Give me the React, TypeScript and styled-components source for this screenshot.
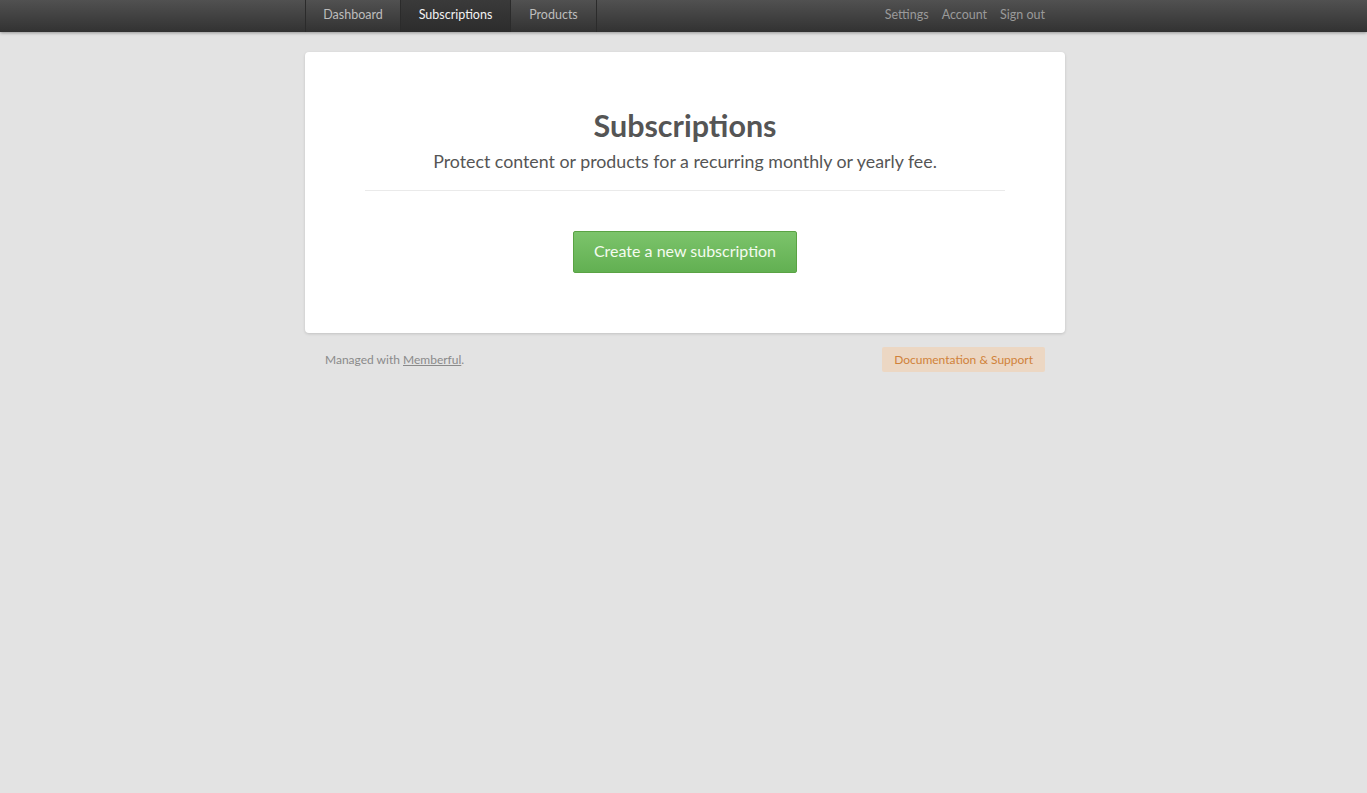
import React from "react";
import styled, { createGlobalStyle } from "styled-components";

const Global = createGlobalStyle`
  html, body { margin: 0; padding: 0; }
  body {
    background: #e3e3e3;
    font-family: "Lato", "Open Sans", sans-serif;
    color: #555;
    min-height: 793px;
  }
`;

const Page = styled.div`
  padding-left: 3px;
`;

const TopBar = styled.header`
  height: 32px;
  margin-left: -3px;
  padding-left: 3px;
  background: linear-gradient(#515151, #323232);
  box-shadow: 0 1px 3px rgba(0, 0, 0, 0.35);
`;

const BarInner = styled.div`
  width: 760px;
  margin: 0 auto;
  height: 100%;
  display: flex;
  justify-content: space-between;
  align-items: stretch;
`;

const Tabs = styled.nav`
  display: flex;
  border-left: 1px solid #2b2b2b;
`;

const Tab = styled.a<{ $active?: boolean; $w: number }>`
  display: flex;
  align-items: center;
  justify-content: center;
  width: ${(p) => p.$w}px;
  padding-bottom: 4px;
  box-sizing: border-box;
  font-size: 12.5px;
  color: ${(p) => (p.$active ? "#f2f2f2" : "#bdbdbd")};
  text-decoration: none;
  border-right: 1px solid #2b2b2b;
  background: ${(p) => (p.$active ? "linear-gradient(#3a3a3a, #2c2c2c)" : "transparent")};
`;

const Links = styled.nav`
  display: flex;
  align-items: center;
  gap: 13px;
  padding: 0 20px 4px 0;
`;

const Link = styled.a`
  font-size: 12.5px;
  color: #9a9a9a;
  text-decoration: none;
`;

const Main = styled.main`
  width: 760px;
  margin: 20px auto 0;
`;

const Card = styled.section`
  background: #fff;
  border-radius: 4px;
  box-shadow: 0 1px 3px rgba(0, 0, 0, 0.15);
  padding: 55px 60px 60px;
  display: flex;
  flex-direction: column;
  align-items: center;
`;

const Title = styled.h1`
  margin: 0;
  font-size: 30.5px;
  font-weight: 700;
  color: #555;
  line-height: 37px;
`;

const Subtitle = styled.p`
  margin: 0;
  padding-top: 5px;
  font-size: 17.8px;
  line-height: 24px;
  color: #555;
`;

const Divider = styled.hr`
  align-self: stretch;
  border: 0;
  border-top: 1px solid #eaeaea;
  margin: 17px 0 40px;
`;

const PrimaryButton = styled.button`
  width: 224px;
  height: 42px;
  padding: 0 0 3px;
  border: 1px solid #5aa344;
  border-radius: 2px;
  background: linear-gradient(#7cc46b, #62b052);
  color: #f4fbef;
  font-family: inherit;
  font-size: 16px;
  cursor: pointer;
`;

const Footer = styled.footer`
  display: flex;
  justify-content: space-between;
  align-items: center;
  padding: 14px 20px 0;
`;

const Managed = styled.span`
  font-size: 12px;
  color: #8a8a8a;
`;

const Underlined = styled.a`
  color: #8a8a8a;
  text-decoration: underline;
`;

const DocBadge = styled.a`
  background: #ecd7c3;
  color: #d0823a;
  font-size: 12px;
  border-radius: 2px;
  padding: 0 12px;
  height: 25px;
  display: flex;
  align-items: center;
  text-decoration: none;
`;

export default function App() {
  return (
    <Page>
      <Global />
      <TopBar>
        <BarInner>
          <Tabs>
            <Tab $w={95}>Dashboard</Tab>
            <Tab $w={110} $active>Subscriptions</Tab>
            <Tab $w={86}>Products</Tab>
          </Tabs>
          <Links>
            <Link>Settings</Link>
            <Link>Account</Link>
            <Link>Sign out</Link>
          </Links>
        </BarInner>
      </TopBar>
      <Main>
        <Card>
          <Title>Subscriptions</Title>
          <Subtitle>Protect content or products for a recurring monthly or yearly fee.</Subtitle>
          <Divider />
          <PrimaryButton>Create a new subscription</PrimaryButton>
        </Card>
        <Footer>
          <Managed>
            Managed with <Underlined>Memberful</Underlined>.
          </Managed>
          <DocBadge>Documentation &amp; Support</DocBadge>
        </Footer>
      </Main>
    </Page>
  );
}
